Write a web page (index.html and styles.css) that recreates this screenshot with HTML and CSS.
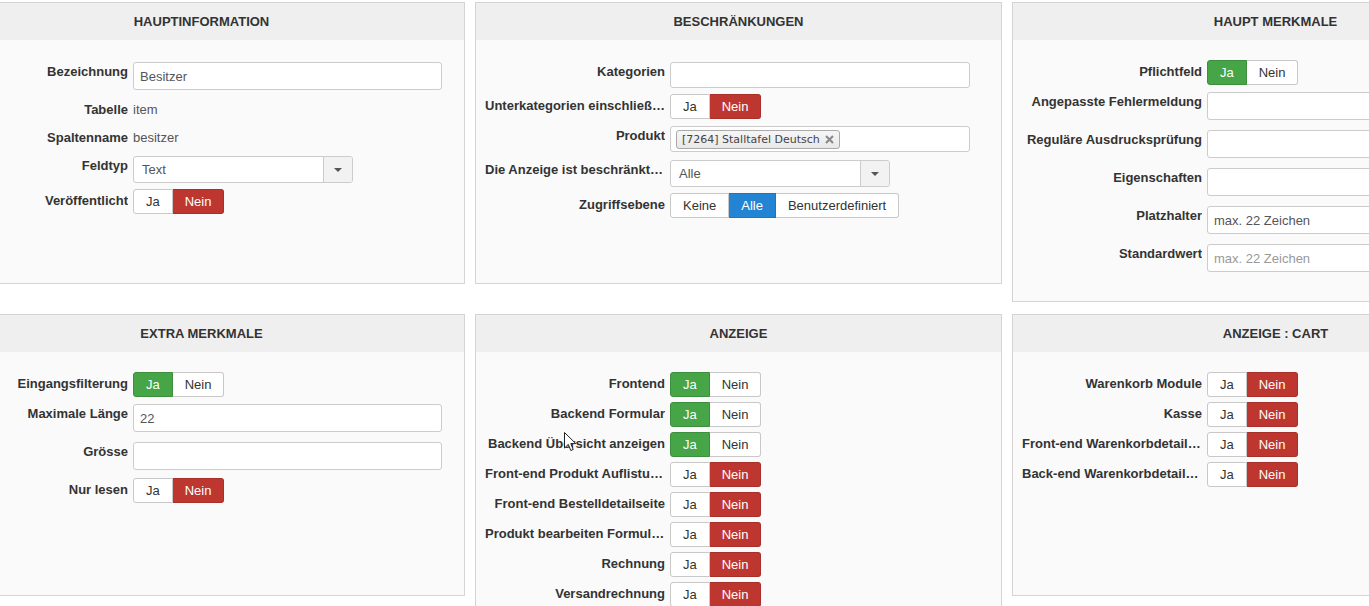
FILE: index.html
```html
<!DOCTYPE html>
<html lang="de">

<head>
  <meta charset="UTF-8" />
  <meta name="viewport" content="width=device-width, initial-scale=1.0" />
  <title>Feld bearbeiten</title>
  <link rel="stylesheet" href="styles.css">
</head>

<body>
  <div class="panels">

    <!-- Hauptinformation -->
    <section class="panel">
      <h3 class="panel-title">Hauptinformation</h3>
      <div class="panel-body">
        <div class="field">
          <label class="field-label">Bezeichnung</label>
          <input class="text-input" type="text" value="Besitzer">
        </div>
        <div class="field">
          <label class="field-label">Tabelle</label>
          <span class="field-value">item</span>
        </div>
        <div class="field">
          <label class="field-label">Spaltenname</label>
          <span class="field-value">besitzer</span>
        </div>
        <div class="field">
          <label class="field-label">Feldtyp</label>
          <div class="select-box"><span class="select-text">Text</span><span class="select-arrow"></span></div>
        </div>
        <div class="field">
          <label class="field-label">Veröffentlicht</label>
          <div class="toggle"><span class="toggle-btn">Ja</span><span class="toggle-btn no-on">Nein</span></div>
        </div>
      </div>
    </section>

    <!-- Beschränkungen -->
    <section class="panel">
      <h3 class="panel-title">Beschränkungen</h3>
      <div class="panel-body">
        <div class="field">
          <label class="field-label">Kategorien</label>
          <div class="chosen-box"></div>
        </div>
        <div class="field">
          <label class="field-label">Unterkategorien einschließen</label>
          <div class="toggle"><span class="toggle-btn">Ja</span><span class="toggle-btn no-on">Nein</span></div>
        </div>
        <div class="field">
          <label class="field-label">Produkt</label>
          <div class="chosen-box">
            <span class="chosen-tag">[7264] Stalltafel Deutsch
              <svg class="chosen-close" width="9" height="9" viewBox="0 0 9 9"><path d="M1 1 L8 8 M8 1 L1 8" stroke="#888" stroke-width="2"/></svg>
            </span>
          </div>
        </div>
        <div class="field">
          <label class="field-label">Die Anzeige ist beschränkt auf</label>
          <div class="select-box"><span class="select-text">Alle</span><span class="select-arrow"></span></div>
        </div>
        <div class="field">
          <label class="field-label">Zugriffsebene</label>
          <div class="toggle"><span class="toggle-btn">Keine</span><span class="toggle-btn all-on">Alle</span><span class="toggle-btn">Benutzerdefiniert</span></div>
        </div>
      </div>
    </section>

    <!-- Haupt Merkmale -->
    <section class="panel">
      <h3 class="panel-title">Haupt Merkmale</h3>
      <div class="panel-body">
        <div class="field">
          <label class="field-label">Pflichtfeld</label>
          <div class="toggle"><span class="toggle-btn yes-on">Ja</span><span class="toggle-btn">Nein</span></div>
        </div>
        <div class="field">
          <label class="field-label">Angepasste Fehlermeldung</label>
          <input class="text-input" type="text">
        </div>
        <div class="field">
          <label class="field-label">Reguläre Ausdrucksprüfung</label>
          <input class="text-input" type="text">
        </div>
        <div class="field">
          <label class="field-label">Eigenschaften</label>
          <input class="text-input" type="text">
        </div>
        <div class="field">
          <label class="field-label">Platzhalter</label>
          <input class="text-input" type="text" value="max. 22 Zeichen">
        </div>
        <div class="field">
          <label class="field-label">Standardwert</label>
          <input class="text-input" type="text" placeholder="max. 22 Zeichen">
        </div>
      </div>
    </section>

    <!-- Extra Merkmale -->
    <section class="panel">
      <h3 class="panel-title">Extra Merkmale</h3>
      <div class="panel-body">
        <div class="field">
          <label class="field-label">Eingangsfilterung</label>
          <div class="toggle"><span class="toggle-btn yes-on">Ja</span><span class="toggle-btn">Nein</span></div>
        </div>
        <div class="field">
          <label class="field-label">Maximale Länge</label>
          <input class="text-input" type="text" value="22">
        </div>
        <div class="field">
          <label class="field-label">Grösse</label>
          <input class="text-input" type="text">
        </div>
        <div class="field">
          <label class="field-label">Nur lesen</label>
          <div class="toggle"><span class="toggle-btn">Ja</span><span class="toggle-btn no-on">Nein</span></div>
        </div>
      </div>
    </section>

    <!-- Anzeige -->
    <section class="panel">
      <h3 class="panel-title">Anzeige</h3>
      <div class="panel-body">
        <div class="field">
          <label class="field-label">Frontend</label>
          <div class="toggle"><span class="toggle-btn yes-on">Ja</span><span class="toggle-btn">Nein</span></div>
        </div>
        <div class="field">
          <label class="field-label">Backend Formular</label>
          <div class="toggle"><span class="toggle-btn yes-on">Ja</span><span class="toggle-btn">Nein</span></div>
        </div>
        <div class="field has-pointer">
          <label class="field-label">Backend Übersicht anzeigen</label>
          <div class="toggle"><span class="toggle-btn yes-on">Ja</span><span class="toggle-btn">Nein</span></div>
          <svg class="mouse-pointer" width="13" height="20" viewBox="0 0 13 20"><path d="M0.5 0.5 L0.5 16 L4.3 12.4 L6.8 18.5 L9.2 17.5 L6.8 11.6 L11.8 11.6 Z" fill="#fff" stroke="#222" stroke-width="1"/></svg>
        </div>
        <div class="field">
          <label class="field-label">Front-end Produkt Auflistung</label>
          <div class="toggle"><span class="toggle-btn">Ja</span><span class="toggle-btn no-on">Nein</span></div>
        </div>
        <div class="field">
          <label class="field-label">Front-end Bestelldetailseite</label>
          <div class="toggle"><span class="toggle-btn">Ja</span><span class="toggle-btn no-on">Nein</span></div>
        </div>
        <div class="field">
          <label class="field-label">Produkt bearbeiten Formular (Frontend)</label>
          <div class="toggle"><span class="toggle-btn">Ja</span><span class="toggle-btn no-on">Nein</span></div>
        </div>
        <div class="field">
          <label class="field-label">Rechnung</label>
          <div class="toggle"><span class="toggle-btn">Ja</span><span class="toggle-btn no-on">Nein</span></div>
        </div>
        <div class="field">
          <label class="field-label">Versandrechnung</label>
          <div class="toggle"><span class="toggle-btn">Ja</span><span class="toggle-btn no-on">Nein</span></div>
        </div>
      </div>
    </section>

    <!-- Anzeige : Cart -->
    <section class="panel">
      <h3 class="panel-title">Anzeige : Cart</h3>
      <div class="panel-body">
        <div class="field">
          <label class="field-label">Warenkorb Module</label>
          <div class="toggle"><span class="toggle-btn">Ja</span><span class="toggle-btn no-on">Nein</span></div>
        </div>
        <div class="field">
          <label class="field-label">Kasse</label>
          <div class="toggle"><span class="toggle-btn">Ja</span><span class="toggle-btn no-on">Nein</span></div>
        </div>
        <div class="field">
          <label class="field-label">Front-end Warenkorbdetailseite</label>
          <div class="toggle"><span class="toggle-btn">Ja</span><span class="toggle-btn no-on">Nein</span></div>
        </div>
        <div class="field">
          <label class="field-label">Back-end Warenkorbdetailseite</label>
          <div class="toggle"><span class="toggle-btn">Ja</span><span class="toggle-btn no-on">Nein</span></div>
        </div>
      </div>
    </section>

  </div>
</body>

</html>
```

FILE: styles.css
```css
html,
body {
  overflow: hidden;
}

body {
  margin: 0;
  background: #fff;
  color: #333;
  font-family: 'Liberation Sans', Arial, sans-serif;
  font-size: 13px;
}

/* Panel grid (view is scrolled a bit to the right) */
.panels {
  display: grid;
  grid-template-columns: repeat(3, 527px);
  gap: 12px 10px;
  align-items: start;
  margin-left: -62px;
  padding-top: 2px;
}

.panel {
  border: 1px solid #d4d4d4;
  background: #fafafa;
}

.panel-title {
  margin: 0;
  height: 37px;
  line-height: 37px;
  background: #efefef;
  text-align: center;
  text-transform: uppercase;
  font-size: 13px;
  font-weight: bold;
  color: #333;
}

.panel-body {
  box-sizing: border-box;
  min-height: 243px;
  padding: 20px 0 21px;
}

/* Form rows */
.field {
  display: flex;
  align-items: flex-start;
  margin-bottom: 5px;
}

.field-label {
  flex: 0 0 189px;
  box-sizing: border-box;
  margin-right: 5px;
  padding: 3px 0 0 9px;
  line-height: 18px;
  text-align: right;
  font-weight: bold;
  color: #333;
  white-space: nowrap;
  overflow: hidden;
  text-overflow: ellipsis;
}

.field-value {
  padding: 3px 0 2px;
  line-height: 18px;
  color: #555;
}

.text-input {
  box-sizing: border-box;
  width: 309px;
  height: 28px;
  margin: 2px 0 3px;
  padding: 0 6px;
  border: 1px solid #ccc;
  border-radius: 3px;
  background: #fff;
  font-family: inherit;
  font-size: 13px;
  color: #555;
  outline: none;
}

.text-input::placeholder {
  color: #999;
}

/* Select with arrow button */
.select-box {
  box-sizing: border-box;
  display: flex;
  width: 220px;
  height: 27px;
  margin: 2px 0 1px;
  border: 1px solid #ccc;
  border-radius: 3px;
  background: #fff;
}

.select-text {
  flex: 1;
  padding-left: 8px;
  line-height: 25px;
  color: #555;
}

.select-arrow {
  position: relative;
  width: 28px;
  border-left: 1px solid #ccc;
  background: #f2f2f2;
  border-radius: 0 3px 3px 0;
}

.select-arrow::after {
  content: "";
  position: absolute;
  left: 10px;
  top: 11px;
  border-top: 4px solid #555;
  border-left: 4px solid transparent;
  border-right: 4px solid transparent;
}

/* Multi select (chosen) */
.chosen-box {
  box-sizing: border-box;
  display: flex;
  align-items: center;
  width: 300px;
  height: 26px;
  margin: 2px 0 1px;
  padding: 0 5px;
  border: 1px solid #ccc;
  border-radius: 3px;
  background: #fff;
}

.chosen-tag {
  display: inline-flex;
  align-items: center;
  gap: 5px;
  box-sizing: border-box;
  height: 19px;
  padding: 0 5px;
  border: 1px solid #aaa;
  border-radius: 3px;
  background: linear-gradient(#f6f6f6, #e8e8e8);
  font-family: 'DejaVu Sans', Verdana, sans-serif;
  font-size: 11px;
  color: #444;
}

.chosen-close {
  margin-top: 1px;
}

/* Ja / Nein button groups */
.toggle {
  display: flex;
}

.toggle-btn {
  box-sizing: border-box;
  height: 25px;
  line-height: 23px;
  padding: 0 12px;
  border: 1px solid #c8c8c8;
  border-left-width: 0;
  background: #fff;
  color: #333;
}

.toggle-btn:first-child {
  border-left-width: 1px;
  border-radius: 3px 0 0 3px;
}

.toggle-btn:last-child {
  border-radius: 0 3px 3px 0;
}

.toggle-btn.no-on {
  background: #bd362f;
  border-color: #a9302a;
  color: #fff;
}

.toggle-btn.yes-on {
  background: #46a546;
  border-color: #3d8f3d;
  color: #fff;
}

.toggle-btn.all-on {
  background: #2384d3;
  border-color: #1f74ba;
  color: #fff;
}

/* mouse pointer hovering the list */
.has-pointer {
  position: relative;
}

.mouse-pointer {
  position: absolute;
  left: 88px;
  top: 0;
}
```
